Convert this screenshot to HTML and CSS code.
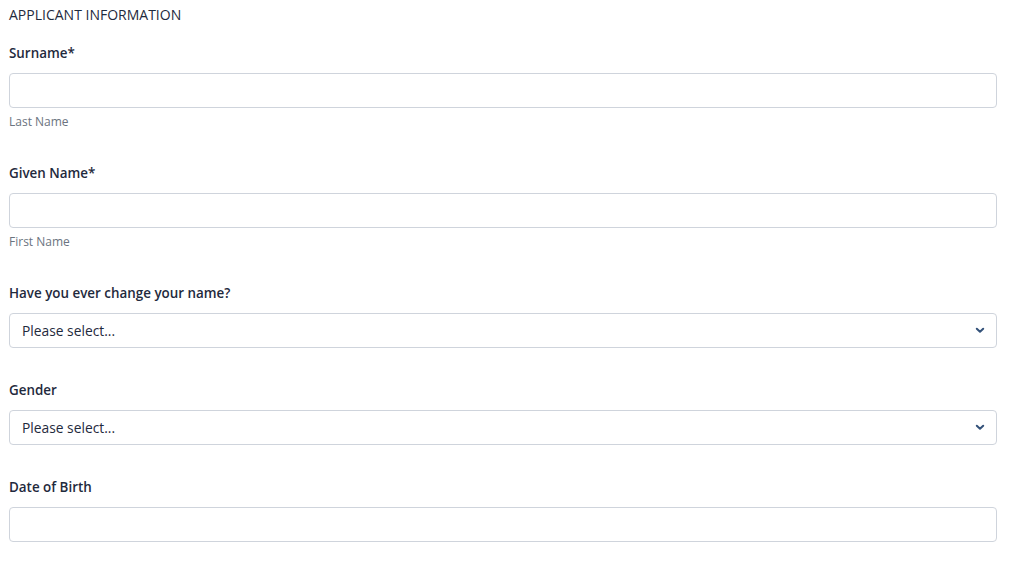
FILE: index.html
```html
<!DOCTYPE html>
<html lang="en">
<head>
<meta charset="utf-8">
<title>Applicant Information</title>
<link rel="stylesheet" href="styles.css">
</head>
<body>
<form class="form">
  <h2 class="section-title">APPLICANT INFORMATION</h2>

  <div class="field">
    <label class="label" for="surname">Surname*</label>
    <input class="control" id="surname" type="text">
    <div class="hint">Last Name</div>
  </div>

  <div class="field">
    <label class="label" for="given">Given Name*</label>
    <input class="control" id="given" type="text">
    <div class="hint">First Name</div>
  </div>

  <div class="field">
    <label class="label">Have you ever change your name?</label>
    <div class="control select">
      <span>Please select...</span>
      <svg class="chev" width="10" height="7" viewBox="0 0 10 7"><path d="M1.8 1.8 L5 4.8 L8.2 1.8" fill="none" stroke="#34527a" stroke-width="2" stroke-linecap="round" stroke-linejoin="round"/></svg>
    </div>
  </div>

  <div class="field">
    <label class="label">Gender</label>
    <div class="control select">
      <span>Please select...</span>
      <svg class="chev" width="10" height="7" viewBox="0 0 10 7"><path d="M1.8 1.8 L5 4.8 L8.2 1.8" fill="none" stroke="#34527a" stroke-width="2" stroke-linecap="round" stroke-linejoin="round"/></svg>
    </div>
  </div>

  <div class="field">
    <label class="label" for="dob">Date of Birth</label>
    <input class="control" id="dob" type="text">
  </div>
</form>
</body>
</html>
```

FILE: styles.css
```css
* { box-sizing: border-box; }
html, body { margin: 0; background: #fff; }
body {
  font-family: "Open Sans", "Liberation Sans", Arial, sans-serif;
  color: #1f2a3d;
}
.form {
  width: 988px;
  margin-left: 9px;
  padding-top: 5px;
  display: flex;
  flex-direction: column;
}
.section-title {
  margin: 0 0 18px;
  font-size: 14px;
  font-weight: 400;
  line-height: 20px;
  color: #1f2a3d;
}
.field {
  display: flex;
  flex-direction: column;
  margin-bottom: 32px;
}
.label {
  font-size: 13.4px;
  font-weight: 600;
  line-height: 20px;
  margin-bottom: 10px;
  color: #1f2a3d;
}
.control {
  height: 35px;
  width: 100%;
  border: 1px solid #cfd4dc;
  border-radius: 4px;
  background: #fff;
  font: inherit;
  font-size: 13.8px;
  padding: 0 12px;
  outline: none;
}
.select {
  display: flex;
  align-items: center;
  justify-content: space-between;
  color: #1f2a3d;
  padding-right: 11px;
}
.chev { display: block; }
.hint {
  margin-top: 4px;
  font-size: 12px;
  line-height: 19px;
  color: #6b7480;
}
```
